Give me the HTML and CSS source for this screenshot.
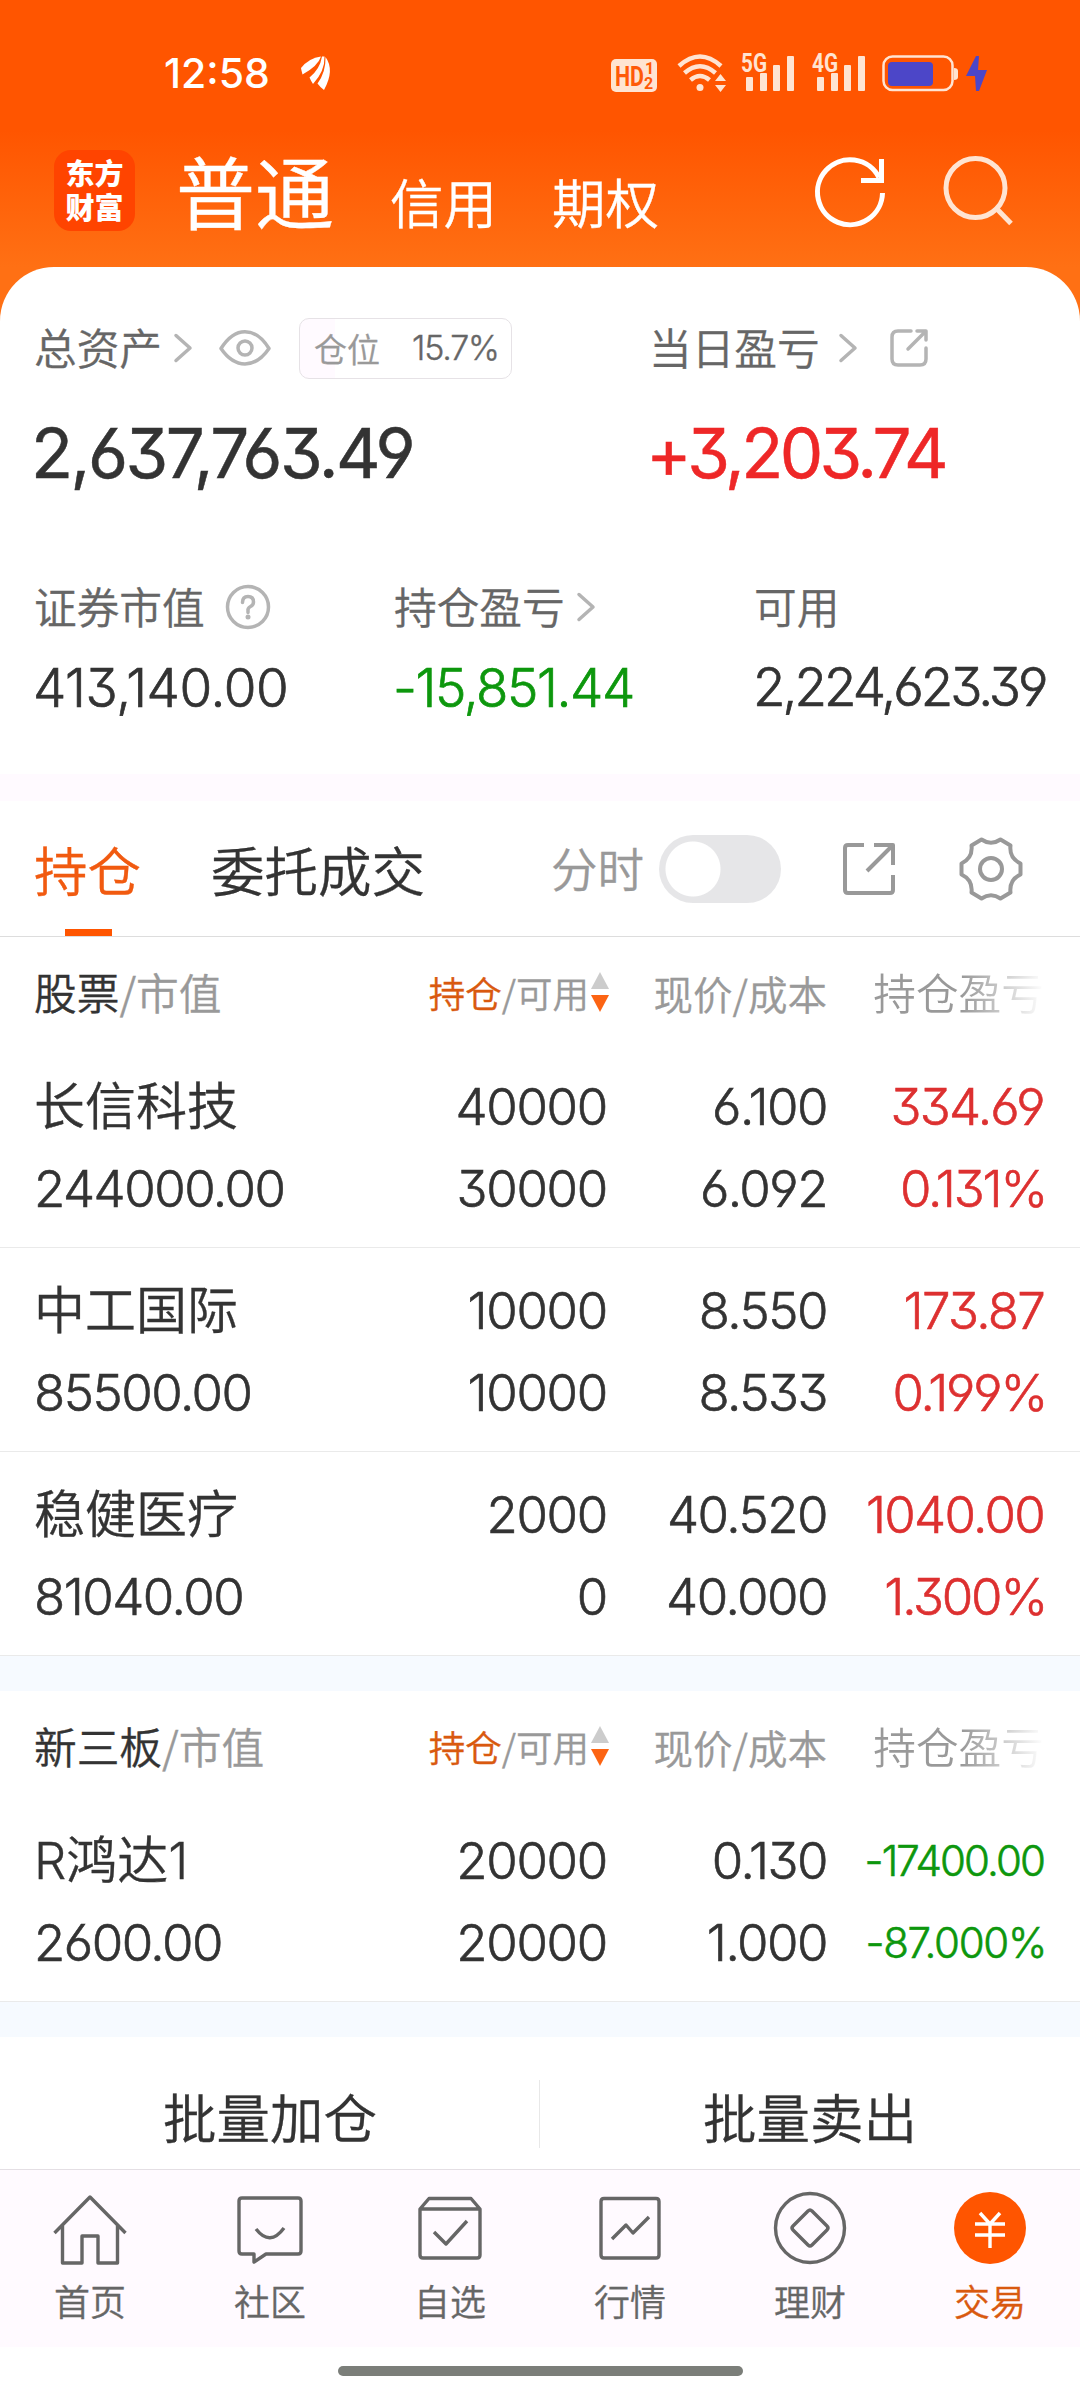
FILE: index.html
```html
<!DOCTYPE html>
<html lang="zh-CN">
<head>
<meta charset="utf-8">
<title>东方财富 交易</title>
<link rel="stylesheet" href="styles.css">
</head>
<body>
<header class="top">
  <div class="status">
    <span class="clock">12:58</span>
    <svg class="brand" width="30" height="34" viewBox="0 0 30 34" fill="#fff"><path d="M0 12Q8 2 20 .5Q17 10 1.500 18.500Q.5 15 0 12Z"/><path d="M8.500 21.500Q19 13 21 .5L23.500 .5Q24 15 12 28Q10 25 8.500 21.500Z"/><path d="M16.500 27.500Q25 16 24.500 1Q34 14 23 34Q19 31 16.500 27.500Z"/></svg>
    <svg class="signals" width="378" height="40" viewBox="0 0 378 40">
      <g fill="#ffe4d2">
        <rect x="1" y="6" width="46" height="33" rx="5"/>
        <circle cx="90" cy="34.500" r="3.500"/>
        <path d="M105 28l5.500-7l5.500 7zM105 32h11l-5.500 7z"/>
        <rect x="136" y="24" width="7" height="14" rx="1"/><rect x="150" y="20" width="7" height="18" rx="1"/><rect x="163" y="12" width="7" height="26" rx="1"/><rect x="177" y="3" width="7" height="35" rx="1"/>
        <rect x="207" y="24" width="7" height="14" rx="1"/><rect x="221" y="20" width="7" height="18" rx="1"/><rect x="234" y="12" width="7" height="26" rx="1"/><rect x="248" y="3" width="7" height="35" rx="1"/>
        <path d="M344 15q4 0 4 3v6q0 3-4 3z"/>
      </g>
      <g fill="none" stroke="#ffe4d2" stroke-width="4.500">
        <path d="M69 13Q90-6 111 13M74.500 20Q90 6.500 105.500 20M80.500 27Q90 19 99.500 27"/>
        <rect x="273.500" y="3.500" width="69" height="33.500" rx="9" stroke-width="2.500"/>
      </g>
      <g class="sig-text" fill="#ffe4d2">
        <text x="131" y="18.500" font-size="25" textLength="26" lengthAdjust="spacingAndGlyphs">5G</text>
        <text x="202" y="18.500" font-size="25" textLength="26" lengthAdjust="spacingAndGlyphs">4G</text>
      </g>
      <g class="sig-text" fill="#ff5a08">
        <text x="5" y="32.500" font-size="27" textLength="29" lengthAdjust="spacingAndGlyphs">HD</text>
        <text x="35" y="21" font-size="16">1</text><text x="34" y="35.500" font-size="16">2</text>
      </g>
      <rect x="278" y="9" width="45" height="24" rx="4" fill="#4c46c8"/>
      <path d="M366 3l-10 20h9l1 15l3 0l8-21h-9l1-14z" fill="#4c46c8"/>
    </svg>
  </div>
  <div class="titlebar">
    <div class="logo"><span>东方</span><span>财富</span></div>
    <nav class="modes"><b>普通</b><span>信用</span><span>期权</span></nav>
    <svg class="refresh" width="76" height="76" viewBox="0 0 76 76" fill="none" stroke="#fff" stroke-width="5"><path d="M70.500 39A32.500 32.500 0 1 1 67 23.500"/><path d="M49 26.500H69.500V5"/></svg>
    <svg class="search" width="76" height="76" viewBox="0 0 76 76" fill="none" stroke="#ffe4d2" stroke-width="5"><circle cx="35.500" cy="34" r="29.500"/><path d="M56 54L71 69.500"/></svg>
  </div>
</header>

<main>
  <section class="summary">
    <div class="totals">
      <div>
        <div class="label"><span>总资产</span>
          <svg class="chev" width="20" height="30" viewBox="0 0 20 30"><path d="M3 2.500L17 15L3 27.500"/></svg>
          <svg class="eye" width="52" height="36" viewBox="0 0 52 36"><path d="M2 18.500C16-4 36-4 50 18.500C36 39 16 39 2 18.500Z"/><circle cx="26" cy="18" r="7"/></svg>
          <span class="position"><i>仓位</i><em>15.7%</em></span>
        </div>
        <div class="big n">2,637,763.49</div>
      </div>
      <div>
        <div class="label"><span>当日盈亏</span>
          <svg class="chev wide" width="20" height="30" viewBox="0 0 20 30"><path d="M3 2.500L17 15L3 27.500"/></svg>
          <svg class="share" width="40" height="40" viewBox="0 0 40 40"><path d="M22 3H9Q3 3 3 9V31Q3 37 9 37H31Q37 37 37 31V20M28 3H37V12M37 3L19 21"/></svg>
        </div>
        <div class="big up n tight">+3,203.74</div>
      </div>
    </div>
    <div class="details">
      <div>
        <div class="label"><span>证券市值</span>
          <svg class="help" width="46" height="46" viewBox="0 0 46 46"><circle cx="23" cy="23" r="20.500"/><path d="M17.500 18.500Q17.500 12.500 23 12.500T28.500 18Q28.500 21 25.500 22.500T23 27V28.500"/><circle class="dot" cx="23" cy="33" r="2.500"/></svg>
        </div>
        <div class="mid n">413,140.00</div>
      </div>
      <div>
        <div class="label"><span>持仓盈亏</span>
          <svg class="chev" width="20" height="30" viewBox="0 0 20 30"><path d="M3 2.500L17 15L3 27.500"/></svg>
        </div>
        <div class="mid n down loss">-15,851.44</div>
      </div>
      <div>
        <div class="label"><span>可用</span></div>
        <div class="mid n avail">2,224,623.39</div>
      </div>
    </div>
  </section>

  <section class="tabs">
    <div class="tab active">持仓</div>
    <div class="tab">委托成交</div>
    <div class="minute">分时</div>
    <div class="toggle"></div>
    <svg class="share2" width="54" height="54" viewBox="0 0 54 54"><path d="M22 3H6Q3 3 3 6V48Q3 51 6 51H48Q51 51 51 48V33M32 3H51V23M50 4L25 29"/></svg>
    <svg class="gear" width="64" height="64" viewBox="0 0 64 64"><path d="M22.500 2.500Q32 9 41.500 2.500L51.500 8.500Q50 21 61.500 26.500V37.500Q50 43 51.500 55.500L41.500 61.500Q32 55 22.500 61.500L12.500 55.500Q14 43 2.500 37.500V26.500Q14 21 12.500 8.500Z"/><circle cx="32" cy="32" r="11"/></svg>
  </section>

  <section class="list">
    <div class="row head">
      <div class="c1"><b>股票</b>/市值</div>
      <div class="c2"><b>持仓</b>/可用<svg width="20" height="40" viewBox="0 0 20 40"><path d="M10 0L19 17H1Z" fill="#ccc"/><path d="M1 23H19L10 40Z" fill="#fc6413"/></svg></div>
      <div class="c3">现价/成本</div>
      <div class="c4">持仓盈亏</div>
    </div>
    <div class="row stock">
      <div class="c1"><span class="name">长信科技</span><span>244000.00</span></div>
      <div class="c2"><span>40000</span><span>30000</span></div>
      <div class="c3"><span>6.100</span><span>6.092</span></div>
      <div class="c4 up"><span>334.69</span><span class="pct">0.131%</span></div>
    </div>
    <div class="row stock">
      <div class="c1"><span class="name">中工国际</span><span>85500.00</span></div>
      <div class="c2"><span>10000</span><span>10000</span></div>
      <div class="c3"><span>8.550</span><span>8.533</span></div>
      <div class="c4 up"><span>173.87</span><span class="pct">0.199%</span></div>
    </div>
    <div class="row stock">
      <div class="c1"><span class="name">稳健医疗</span><span>81040.00</span></div>
      <div class="c2"><span>2000</span><span>0</span></div>
      <div class="c3"><span>40.520</span><span>40.000</span></div>
      <div class="c4 up"><span>1040.00</span><span class="pct">1.300%</span></div>
    </div>
  </section>

  <section class="list second">
    <div class="row head">
      <div class="c1"><b>新三板</b>/市值</div>
      <div class="c2"><b>持仓</b>/可用<svg width="20" height="40" viewBox="0 0 20 40"><path d="M10 0L19 17H1Z" fill="#ccc"/><path d="M1 23H19L10 40Z" fill="#fc6413"/></svg></div>
      <div class="c3">现价/成本</div>
      <div class="c4">持仓盈亏</div>
    </div>
    <div class="row stock">
      <div class="c1"><span class="name">R鸿达1</span><span>2600.00</span></div>
      <div class="c2"><span>20000</span><span>20000</span></div>
      <div class="c3"><span>0.130</span><span>1.000</span></div>
      <div class="c4 down small"><span>-17400.00</span><span class="pct">-87.000%</span></div>
    </div>
  </section>

  <section class="batch"><div>批量加仓</div><div>批量卖出</div></section>
</main>

<nav class="bottom">
  <a><svg viewBox="0 0 80 80"><path d="M4.500 43L40 7L75.500 43M12.500 35V73H32V46H48V73H67.500V35"/></svg>首页</a>
  <a><svg viewBox="0 0 80 80"><path d="M12 8H68Q71 8 71 11V61Q71 64 68 64H36L24 72V64H12Q9 64 9 61V11Q9 8 12 8ZM26 39Q40 57 54 38"/></svg>社区</a>
  <a><svg viewBox="0 0 80 80"><path d="M10 19L19 8.500H61L70 19V65Q70 68 67 68H13Q10 68 10 65ZM10 19H70M24 42L36 54L57 31"/></svg>自选</a>
  <a><svg viewBox="0 0 80 80"><path d="M14 8.500H66Q69 8.500 69 11.500V65Q69 68 66 68H14Q11 68 11 65V11.500Q11 8.500 14 8.500ZM22 49L36 35L43 43L59 27"/></svg>行情</a>
  <a><svg viewBox="0 0 80 80"><circle cx="40" cy="38" r="34.500"/><path d="M38 21Q40 19 42 21L57 36Q59 38 57 40L42 55Q40 57 38 55L23 40Q21 38 23 36Z"/></svg>理财</a>
  <a class="on"><svg viewBox="0 0 80 80"><circle cx="40" cy="38" r="36" fill="#ff5500" stroke="none"/><path d="M30 23L40 34L50 23M25 34H55M25 45H55M40 34V58" stroke="#fff"/></svg>交易</a>
</nav>
<footer class="home-bar"><i></i></footer>
</body>
</html>
```
FILE: styles.css
```css
* { box-sizing: border-box; }
body {
  margin: 0;
  width: 1080px;
  height: 2400px;
  display: flex;
  flex-direction: column;
  background: #fff;
  color: #333;
  font-family: "Noto Sans CJK SC", sans-serif;
  font-weight: 350;
  -webkit-text-stroke: .35px;
  white-space: nowrap;
  overflow: hidden;
}
svg { display: block; flex: none; overflow: visible; }
b, i, em { font-weight: inherit; font-style: normal; }
section, header, nav, footer { flex: none; }

.n, .clock, .stock, .position em {
  font-family: Inter, "Noto Sans CJK SC", sans-serif;
  font-feature-settings: "cv03", "cv04", "cv09";
}

/* orange header */
.top {
  height: 321px;
  background: linear-gradient(#ff5500 0, #ff5500 130px, #ff7014 267px);
  color: #fff;
}
.status {
  height: 146px;
  display: flex;
  align-items: center;
  padding: 0 92px 0 164px;
}
.clock { font-size: 41px; font-weight: 500; -webkit-text-stroke: 0; }
.brand { margin-left: 31px; }
.signals { margin-left: auto; }
.sig-text { font-family: Roboto, sans-serif; font-weight: 700; -webkit-text-stroke: 0; }
.titlebar { height: 92px; display: flex; align-items: center; padding-left: 54px; }
.logo {
  width: 81px;
  height: 81px;
  margin-top: -3px;
  border-radius: 17px;
  background: #ff4400;
  display: flex;
  flex-direction: column;
  align-items: center;
  justify-content: center;
  font-size: 29px;
  line-height: 34px;
  font-weight: 900;
  padding-bottom: 4px;
  -webkit-text-stroke: 0;
}
.modes { display: flex; align-items: baseline; margin: 6px 0 0 41px; line-height: 92px; }
.modes b { font-size: 79px; font-weight: 400; }
.modes span { font-size: 53.500px; margin: 1px 0 0 56px; }
.modes span + span { margin-left: 55px; }
.refresh { margin-left: auto; }
.search { margin: 0 64px 0 52px; }

/* assets card */
.summary {
  height: 507px;
  margin-top: -54px;
  background: #fff;
  border-radius: 54px 54px 0 0;
  padding-left: 34px;
}
.totals { display: grid; grid-template-columns: 615px 1fr; padding-top: 51px; }
.label {
  height: 60px;
  display: flex;
  align-items: center;
  font-size: 42.700px;
  line-height: 56px;
  color: #666;
}
.label > span:first-child { padding-bottom: 4px; }
.label svg, .share2, .gear {
  fill: none;
  stroke: #b4b4b4;
  stroke-width: 3.500px;
  stroke-linecap: round;
  stroke-linejoin: round;
}
.chev { margin-left: 11px; }
.chev.wide { margin-left: 18px; }
.eye { margin-left: 26px; }
.share { margin-left: 31px; }
.help { margin-left: 20px; }
.label .dot { fill: #b4b4b4; stroke: none; }
.position {
  width: 213px;
  height: 61px;
  margin-left: 28px;
  border: 1px solid #e6e2e6;
  border-radius: 10px;
  display: flex;
  align-items: center;
  padding-left: 14px;
  background: linear-gradient(90deg, #fffaff 35px, #fff 35px);
}
.position i { font-size: 33px; color: #999; }
.position em { margin-left: 32px; font-size: 34px; font-weight: 300; letter-spacing: -1.200px; -webkit-text-stroke: .4px; }
.big {
  margin-top: 35px;
  font-size: 69px;
  line-height: 80px;
  font-weight: 400;
  letter-spacing: -2.500px;
  margin-left: -3px;
  -webkit-text-stroke: .5px;
}
.big.tight { letter-spacing: -3.600px; }
.details { display: grid; grid-template-columns: 360px 360px 1fr; padding-top: 84px; }
.mid {
  margin: 21px 0 0 -1px;
  font-size: 53px;
  line-height: 60px;
  font-weight: 300;
  letter-spacing: -.4px;
  -webkit-text-stroke: .7px;
}
.mid.loss { letter-spacing: -1.400px; }
.mid.avail { letter-spacing: -3px; margin-top: 20px; }
.big.up { color: #ee2727; }
.up { color: #dd3030; }
.down { color: #0d970d; }

/* tab strip */
.tabs {
  height: 163px;
  border-top: 27px solid #fffaff;
  border-bottom: 1px solid #ddd;
  display: flex;
  align-items: center;
  padding-left: 34px;
}
.tab { height: 135px; line-height: 135px; font-size: 53.500px; }
.tab + .tab { margin-left: 70px; }
.active {
  color: #f15a10;
  background: linear-gradient(#ff5500, #ff5500) 31px bottom / 47px 7px no-repeat;
}
.minute { margin-left: 126px; font-size: 46.500px; color: #999; line-height: 130px; padding-bottom: 3px; }
.toggle {
  width: 122px;
  height: 68px;
  margin-left: 15px;
  border-radius: 34px;
  background: radial-gradient(circle at 34px 34px, #fff 27px, #e6e6e8 28px);
}
.share2 { margin-left: 61px; }
.gear { margin-left: 63px; }
.share2, .gear { stroke: #999; stroke-width: 4px; stroke-linecap: butt; }

/* holdings table */
.row { display: grid; grid-template-columns: 351px 222px 220px 217px; padding-left: 34px; }
.c2, .c3, .c4 { text-align: right; justify-content: flex-end; }
.head { height: 107px; line-height: 107px; color: #999; }
.head > div { display: flex; align-items: center; }
.head .c1 { font-size: 42.700px; }
.head .c1 b { color: #333; }
.head .c2 { font-size: 36.500px; padding-top: 2px; }
.head .c2 b { color: #d9590f; }
.head .c2 svg { margin: 0 -3px 2px 1px; }
.head .c3 { font-size: 39.500px; padding-top: 1px; }
.head .c4 {
  font-size: 42.700px;
  color: transparent;
  -webkit-text-stroke: 0;
  background: linear-gradient(90deg, #999 135px, #fff 217px);
  -webkit-background-clip: text;
  background-clip: text;
}
.stock {
  height: 204px;
  border-bottom: 1px solid #eaeaea;
  padding-top: 22px;
  font-size: 51px;
  font-weight: 300;
  letter-spacing: -1.500px;
  -webkit-text-stroke: .6px;
}
.stock span { display: block; height: 82px; line-height: 82px; }
.stock .name { font-weight: 350; letter-spacing: 0; -webkit-text-stroke: .35px; }
.stock .c2 { letter-spacing: -1.300px; }
.stock .c4 { letter-spacing: -1.700px; }
.stock .c4 .pct { letter-spacing: -2.200px; margin-right: -2px; }
.stock .small { font-size: 42px; letter-spacing: -1.900px; }
.stock .small .pct { letter-spacing: -1.300px; }
.second { border-top: 35px solid #f6faff; }

.batch {
  height: 167px;
  border-top: 35px solid #f6faff;
  display: grid;
  grid-template-columns: 1fr 1fr;
  font-size: 53.500px;
  line-height: 158px;
  text-align: center;
  background: linear-gradient(#e8e8e8, #e8e8e8) 539px 43px / 1px 68px no-repeat;
}

/* bottom navigation */
.bottom {
  height: 178px;
  border-top: 1px solid #e4dfe4;
  background: #fffaff;
  display: grid;
  grid-template-columns: repeat(6, 1fr);
  padding-top: 20px;
}
.bottom a {
  display: flex;
  flex-direction: column;
  align-items: center;
  font-size: 36px;
  line-height: 52px;
  color: #666;
}
.bottom svg { width: 80px; height: 80px; margin-bottom: 4px; fill: none; stroke: #666; stroke-width: 3.400px; stroke-linejoin: round; }
.bottom .on { color: #d9590f; }
.home-bar { padding-top: 19px; }
.home-bar i { display: block; width: 405px; height: 10px; margin: 0 auto; border-radius: 5px; background: #7b7e79; }
```
